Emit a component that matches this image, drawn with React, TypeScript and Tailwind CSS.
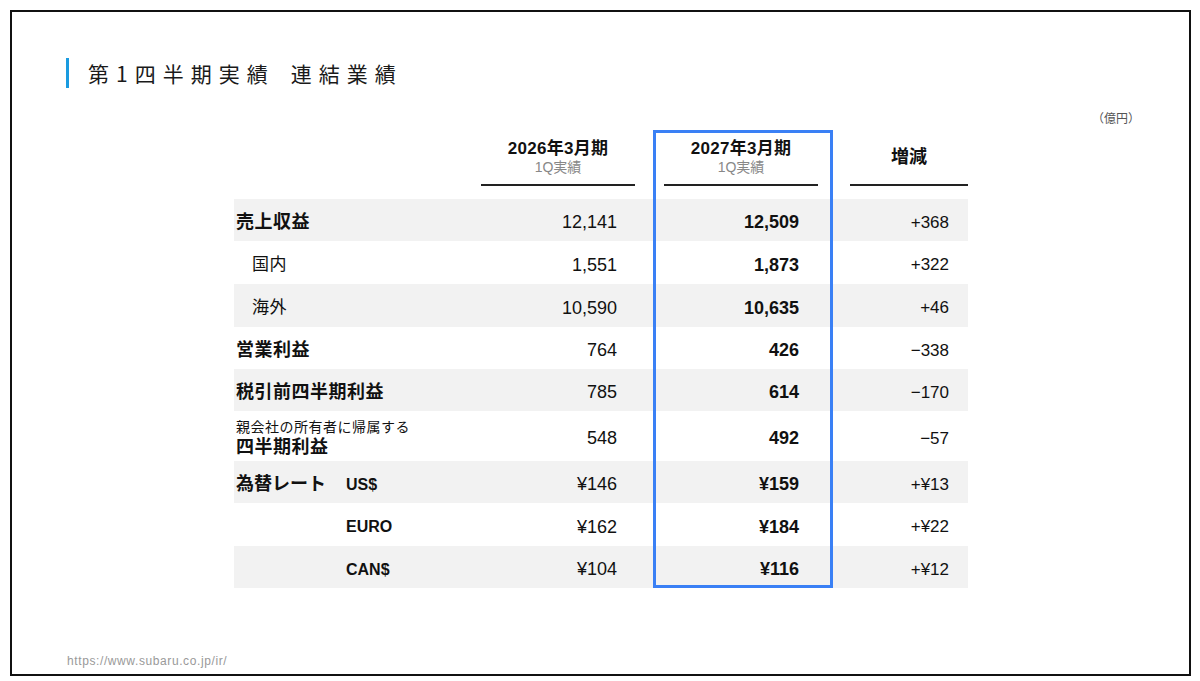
import React from "react";

const FONT = '"Liberation Sans", "Noto Sans CJK JP", sans-serif';

type Row = {
  label: React.ReactNode;
  a: string;
  b: string;
  c: string;
  gray: boolean;
  h: string;
};

const rows: Row[] = [
  { label: <span className="font-bold text-[18px] tracking-[0.5px]">売上収益</span>, a: "12,141", b: "12,509", c: "+368", gray: true, h: "h-[42px]" },
  { label: <span className="pl-[16px] text-[17px] tracking-[0.5px]">国内</span>, a: "1,551", b: "1,873", c: "+322", gray: false, h: "h-[43px]" },
  { label: <span className="pl-[16px] text-[17px] tracking-[0.5px]">海外</span>, a: "10,590", b: "10,635", c: "+46", gray: true, h: "h-[43px]" },
  { label: <span className="font-bold text-[18px] tracking-[0.5px]">営業利益</span>, a: "764", b: "426", c: "−338", gray: false, h: "h-[42px]" },
  { label: <span className="font-bold text-[18px] tracking-[0.5px]">税引前四半期利益</span>, a: "785", b: "614", c: "−170", gray: true, h: "h-[42px]" },
  {
    label: (
      <div className="flex flex-col">
        <span className="text-[14px] leading-[17px] tracking-[0.5px]">親会社の所有者に帰属する</span>
        <span className="font-bold text-[18px] leading-[22px] tracking-[0.5px]">四半期利益</span>
      </div>
    ),
    a: "548",
    b: "492",
    c: "−57",
    gray: false,
    h: "h-[50px]",
  },
  {
    label: (
      <div className="flex items-center">
        <span className="w-[110px] font-bold text-[18px]">為替レート</span>
        <span className="font-bold text-[16px]">US$</span>
      </div>
    ),
    a: "¥146",
    b: "¥159",
    c: "+¥13",
    gray: true,
    h: "h-[42px]",
  },
  {
    label: (
      <div className="flex items-center">
        <span className="w-[110px]"></span>
        <span className="font-bold text-[16px]">EURO</span>
      </div>
    ),
    a: "¥162",
    b: "¥184",
    c: "+¥22",
    gray: false,
    h: "h-[43px]",
  },
  {
    label: (
      <div className="flex items-center">
        <span className="w-[110px]"></span>
        <span className="font-bold text-[16px]">CAN$</span>
      </div>
    ),
    a: "¥104",
    b: "¥116",
    c: "+¥12",
    gray: true,
    h: "h-[42px]",
  },
];

export default function App() {
  return (
    <div
      className="w-[1200px] h-[681px] bg-white pt-[10px] pl-[10px] text-[#111]"
      style={{ fontFamily: FONT }}
    >
      <div className="w-[1181px] h-[666px] border-2 border-[#111] flex flex-col">
        {/* Title */}
        <div className="flex items-center mt-[46px] ml-[54px] h-[30px]">
          <div className="w-[3px] h-[30px] bg-[#1a9be0]"></div>
          <div
            className="ml-[19px] text-[21px] leading-none tracking-[7px] text-[#1a1a1a]"
            style={{ fontFamily: '"Noto Sans CJK JP", sans-serif' }}
          >
            第1四半期実績<span className="ml-[16px]">連結業績</span>
          </div>
        </div>

        {/* Unit */}
        <div className="self-end mr-[49px] mt-[25px] text-[12px] leading-[12px] text-[#555]">
          （億円）
        </div>

        {/* Table */}
        <div className="relative ml-[222px] w-[734px] mt-[5px]">
          {/* header */}
          <div className="flex mb-[13px]">
            <div className="w-[247px]"></div>
            <div className="w-[154px] h-[56px] border-b-2 border-[#222] flex flex-col items-center pt-[9px]">
              <span className="font-bold text-[17px] leading-[19px] tracking-[0.3px]">2026年3月期</span>
              <span className="text-[14px] leading-[15px] mt-[2px] text-[#888]">1Q実績</span>
            </div>
            <div className="w-[29px]"></div>
            <div className="w-[154px] h-[56px] border-b-2 border-[#222] flex flex-col items-center pt-[9px]">
              <span className="font-bold text-[17px] leading-[19px] tracking-[0.3px]">2027年3月期</span>
              <span className="text-[14px] leading-[15px] mt-[2px] text-[#888]">1Q実績</span>
            </div>
            <div className="w-[32px]"></div>
            <div className="w-[118px] h-[56px] border-b-2 border-[#222] flex items-center justify-center pt-[1px]">
              <span className="font-bold text-[18px]">増減</span>
            </div>
          </div>

          {/* body */}
          {rows.map((r, i) => (
            <div
              key={i}
              className={`flex items-center pt-[5px] ${r.h} ${r.gray ? "bg-[#f2f2f2]" : "bg-white"}`}
            >
              <div className="w-[247px] pl-[2px] flex items-center">{r.label}</div>
              <div className="w-[154px] pr-[18px] text-right text-[18px]">{r.a}</div>
              <div className="w-[29px]"></div>
              <div className="w-[154px] pr-[19px] text-right text-[18px] font-bold">{r.b}</div>
              <div className="w-[32px]"></div>
              <div className="w-[118px] pr-[19px] text-right text-[17px]">{r.c}</div>
            </div>
          ))}

          {/* highlight box */}
          <div className="absolute left-[419px] top-0 w-[180px] h-[458px] border-[3px] border-[#3a80f5] pointer-events-none"></div>
        </div>

        {/* Footer */}
        <div className="mt-auto mb-[7px] ml-[55px] text-[12px] leading-[12px] tracking-[0.6px] text-[#999]">
          https://www.subaru.co.jp/ir/
        </div>
      </div>
    </div>
  );
}
